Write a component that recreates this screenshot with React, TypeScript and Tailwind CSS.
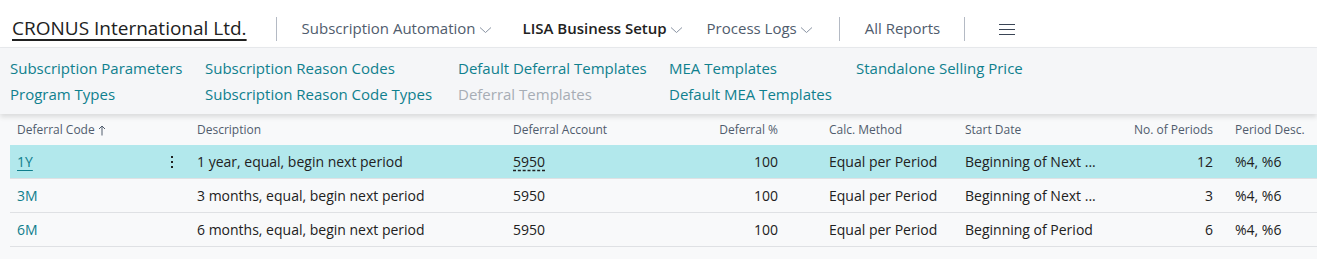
import React from 'react';

const font = { fontFamily: '"Open Sans", "Noto Sans", sans-serif' };

interface Row {
  code: string;
  description: string;
  account: string;
  pct: string;
  method: string;
  start: string;
  periods: string;
  periodDesc: string;
}

const rows: Row[] = [
  { code: '1Y', description: '1 year, equal, begin next period', account: '5950', pct: '100', method: 'Equal per Period', start: 'Beginning of Next ...', periods: '12', periodDesc: '%4, %6' },
  { code: '3M', description: '3 months, equal, begin next period', account: '5950', pct: '100', method: 'Equal per Period', start: 'Beginning of Next ...', periods: '3', periodDesc: '%4, %6' },
  { code: '6M', description: '6 months, equal, begin next period', account: '5950', pct: '100', method: 'Equal per Period', start: 'Beginning of Period', periods: '6', periodDesc: '%4, %6' },
];

const Chevron = () => (
  <svg width="13" height="8" viewBox="0 0 13 8" className="ml-[3px] mt-[3px]">
    <path d="M1 1.5 L6.5 6.5 L12 1.5" fill="none" stroke="#8a94a3" strokeWidth="1" />
  </svg>
);

const Sep = () => <div className="w-px h-[24px] bg-[#b4bac4]" />;

const grid = 'grid grid-cols-[177px_316px_187px_98px_167px_155px_113px_1fr]';

const App: React.FC = () => {
  return (
    <div className="w-[1317px] h-[259px] bg-[#f8f9fa] text-[#212121] overflow-hidden" style={font}>
      {/* top nav */}
      <div className="h-[48px] bg-white border-b border-[#e8eaed] flex items-center pt-[10px]">
        <a className="ml-[12px] text-[19px] text-[#212121] underline underline-offset-[4px] decoration-[1.5px]">CRONUS International Ltd.</a>
        <div className="ml-[29px]"><Sep /></div>
        <div className="ml-[25px] flex items-center text-[15px] text-[#505c6d]">
          Subscription Automation<Chevron />
        </div>
        <div className="ml-[31px] flex items-center text-[15px] font-semibold text-[#212121]">
          LISA Business Setup<Chevron />
        </div>
        <div className="ml-[24px] flex items-center text-[15px] text-[#505c6d]">
          Process Logs<Chevron />
        </div>
        <div className="ml-[26px]"><Sep /></div>
        <div className="ml-[25px] text-[15px] text-[#505c6d]">All Reports</div>
        <div className="ml-[24px]"><Sep /></div>
        <div className="ml-[34px] flex flex-col gap-[4px] mt-[1px]">
          <div className="w-[16px] h-px bg-[#3a4556]" />
          <div className="w-[16px] h-px bg-[#3a4556]" />
          <div className="w-[16px] h-px bg-[#3a4556]" />
        </div>
      </div>

      {/* action bar */}
      <div className="h-[66px] bg-[#f5f6f8] shadow-[0_3px_5px_rgba(0,0,0,0.12)] relative z-10 pl-[10px] pt-[9px] text-[15px] text-[#0f808e] grid grid-cols-[195px_253px_211px_187px_1fr] grid-rows-[26px_26px]">
        <div>Subscription Parameters</div>
        <div>Subscription Reason Codes</div>
        <div>Default Deferral Templates</div>
        <div>MEA Templates</div>
        <div>Standalone Selling Price</div>
        <div>Program Types</div>
        <div>Subscription Reason Code Types</div>
        <div className="text-[#a7adb5]">Deferral Templates</div>
        <div>Default MEA Templates</div>
        <div />
      </div>

      {/* table */}
      <div className="pl-[10px]">
        <div className={`${grid} h-[30px] items-center text-[12px] text-[#505c6d] mt-[1px]`}>
          <div className="pl-[7px] flex items-center">Deferral Code
            <svg width="8" height="11" viewBox="0 0 8 11" className="ml-[3px]">
              <path d="M4 10.5 V1 M1 4 L4 1 L7 4" fill="none" stroke="#505c6d" strokeWidth="1" />
            </svg>
          </div>
          <div className="pl-[10px]">Description</div>
          <div className="pl-[10px]">Deferral Account</div>
          <div className="text-right pr-[10px]">Deferral %</div>
          <div className="pl-[41px]">Calc. Method</div>
          <div className="pl-[10px]">Start Date</div>
          <div className="text-right pr-[10px]">No. of Periods</div>
          <div className="pl-[12px]">Period Desc.</div>
        </div>
        {rows.map((r, i) => (
          <div
            key={r.code}
            className={`${grid} h-[34px] items-center text-[14px] border-b border-[#dfe1e4] ${i === 0 ? 'bg-[#b2e8ec]' : ''}`}
          >
            <div className="pl-[7px] pr-[14px] flex items-center justify-between">
              <span className={`text-[#0f7e8c] ${i === 0 ? 'underline underline-offset-[3px]' : ''}`}>{r.code}</span>
              {i === 0 && (
                <span className="flex flex-col gap-[3px]">
                  <span className="w-[2px] h-[2px] bg-[#212121]" />
                  <span className="w-[2px] h-[2px] bg-[#212121]" />
                  <span className="w-[2px] h-[2px] bg-[#212121]" />
                </span>
              )}
            </div>
            <div className="pl-[10px]">{r.description}</div>
            <div className="pl-[10px]">
              <span className={i === 0 ? 'underline decoration-dashed underline-offset-[3px]' : ''}>{r.account}</span>
            </div>
            <div className="text-right pr-[10px]">{r.pct}</div>
            <div className="pl-[41px]">{r.method}</div>
            <div className="pl-[10px]">{r.start}</div>
            <div className="text-right pr-[10px]">{r.periods}</div>
            <div className="pl-[12px]">{r.periodDesc}</div>
          </div>
        ))}
      </div>
    </div>
  );
};

export default App;
